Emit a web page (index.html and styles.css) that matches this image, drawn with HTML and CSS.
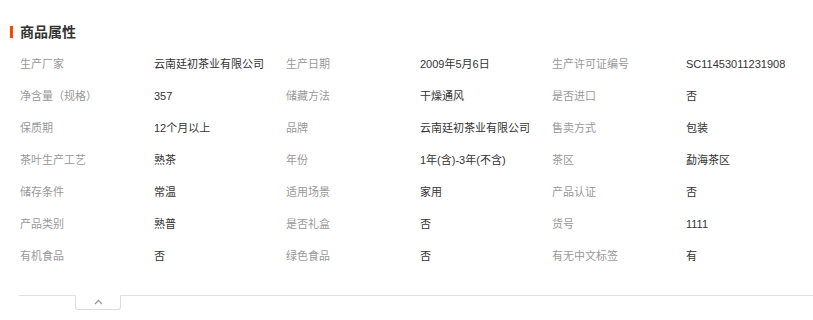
FILE: index.html
```html
<!DOCTYPE html>
<html lang="zh-CN">
<head>
<meta charset="utf-8">
<link rel="stylesheet" href="styles.css">
</head>
<body>
<div class="panel">
  <h2 class="title">商品属性</h2>
  <div class="attrs">
    <span class="lb">生产厂家</span><span class="vl">云南廷初茶业有限公司</span>
    <span class="lb">生产日期</span><span class="vl">2009年5月6日</span>
    <span class="lb">生产许可证编号</span><span class="vl">SC11453011231908</span>

    <span class="lb">净含量（规格）</span><span class="vl">357</span>
    <span class="lb">储藏方法</span><span class="vl">干燥通风</span>
    <span class="lb">是否进口</span><span class="vl">否</span>

    <span class="lb">保质期</span><span class="vl">12个月以上</span>
    <span class="lb">品牌</span><span class="vl">云南廷初茶业有限公司</span>
    <span class="lb">售卖方式</span><span class="vl">包装</span>

    <span class="lb">茶叶生产工艺</span><span class="vl">熟茶</span>
    <span class="lb">年份</span><span class="vl">1年(含)-3年(不含)</span>
    <span class="lb">茶区</span><span class="vl">勐海茶区</span>

    <span class="lb">储存条件</span><span class="vl">常温</span>
    <span class="lb">适用场景</span><span class="vl">家用</span>
    <span class="lb">产品认证</span><span class="vl">否</span>

    <span class="lb">产品类别</span><span class="vl">熟普</span>
    <span class="lb">是否礼盒</span><span class="vl">否</span>
    <span class="lb">货号</span><span class="vl">1111</span>

    <span class="lb">有机食品</span><span class="vl">否</span>
    <span class="lb">绿色食品</span><span class="vl">否</span>
    <span class="lb">有无中文标签</span><span class="vl">有</span>
  </div>
  <div class="foot">
    <button class="toggle" type="button" aria-label="收起">
      <svg width="9" height="6" viewBox="0 0 9 6"><path d="M1 5 L4.5 1.5 L8 5" fill="none" stroke="#999" stroke-width="1.3"/></svg>
    </button>
  </div>
</div>
</body>
</html>
```
FILE: styles.css
```css
* { box-sizing: border-box; }
body {
  margin: 0;
  background: #fff;
  font-family: "Liberation Sans", "Noto Sans CJK SC", sans-serif;
  font-size: 11px;
  color: #333;
}
.panel {
  padding: 20px 0 0 19px;
}
.title {
  position: relative;
  margin: 0;
  padding-left: 1px;
  font-size: 14px;
  font-weight: bold;
  line-height: 22px;
  height: 22px;
  color: #333;
  font-family: "Noto Sans CJK SC", sans-serif;
}
.title::before {
  content: "";
  position: absolute;
  left: -9px;
  top: 6px;
  width: 3px;
  height: 12px;
  background: #ff4400;
}
.attrs {
  display: grid;
  grid-template-columns: 134px 132px 134px 132px 134px 1fr;
  grid-auto-rows: 32px;
  margin-top: 6px;
  padding-left: 1px;
  line-height: 32px;
}
.lb { color: #999; white-space: nowrap; }
.vl { color: #333; white-space: nowrap; }
.foot {
  margin-top: 23px;
  border-top: 1px solid #e0e0e0;
  height: 20px;
  padding-left: 56px;
}
.toggle {
  display: flex;
  align-items: flex-start;
  justify-content: center;
  width: 46px;
  height: 15px;
  margin-top: -1px;
  padding: 3px 0 0;
  border: 1px solid #ddd;
  border-top: 1px solid #fff;
  border-radius: 0 0 3px 3px;
  background: #fff;
}
```
